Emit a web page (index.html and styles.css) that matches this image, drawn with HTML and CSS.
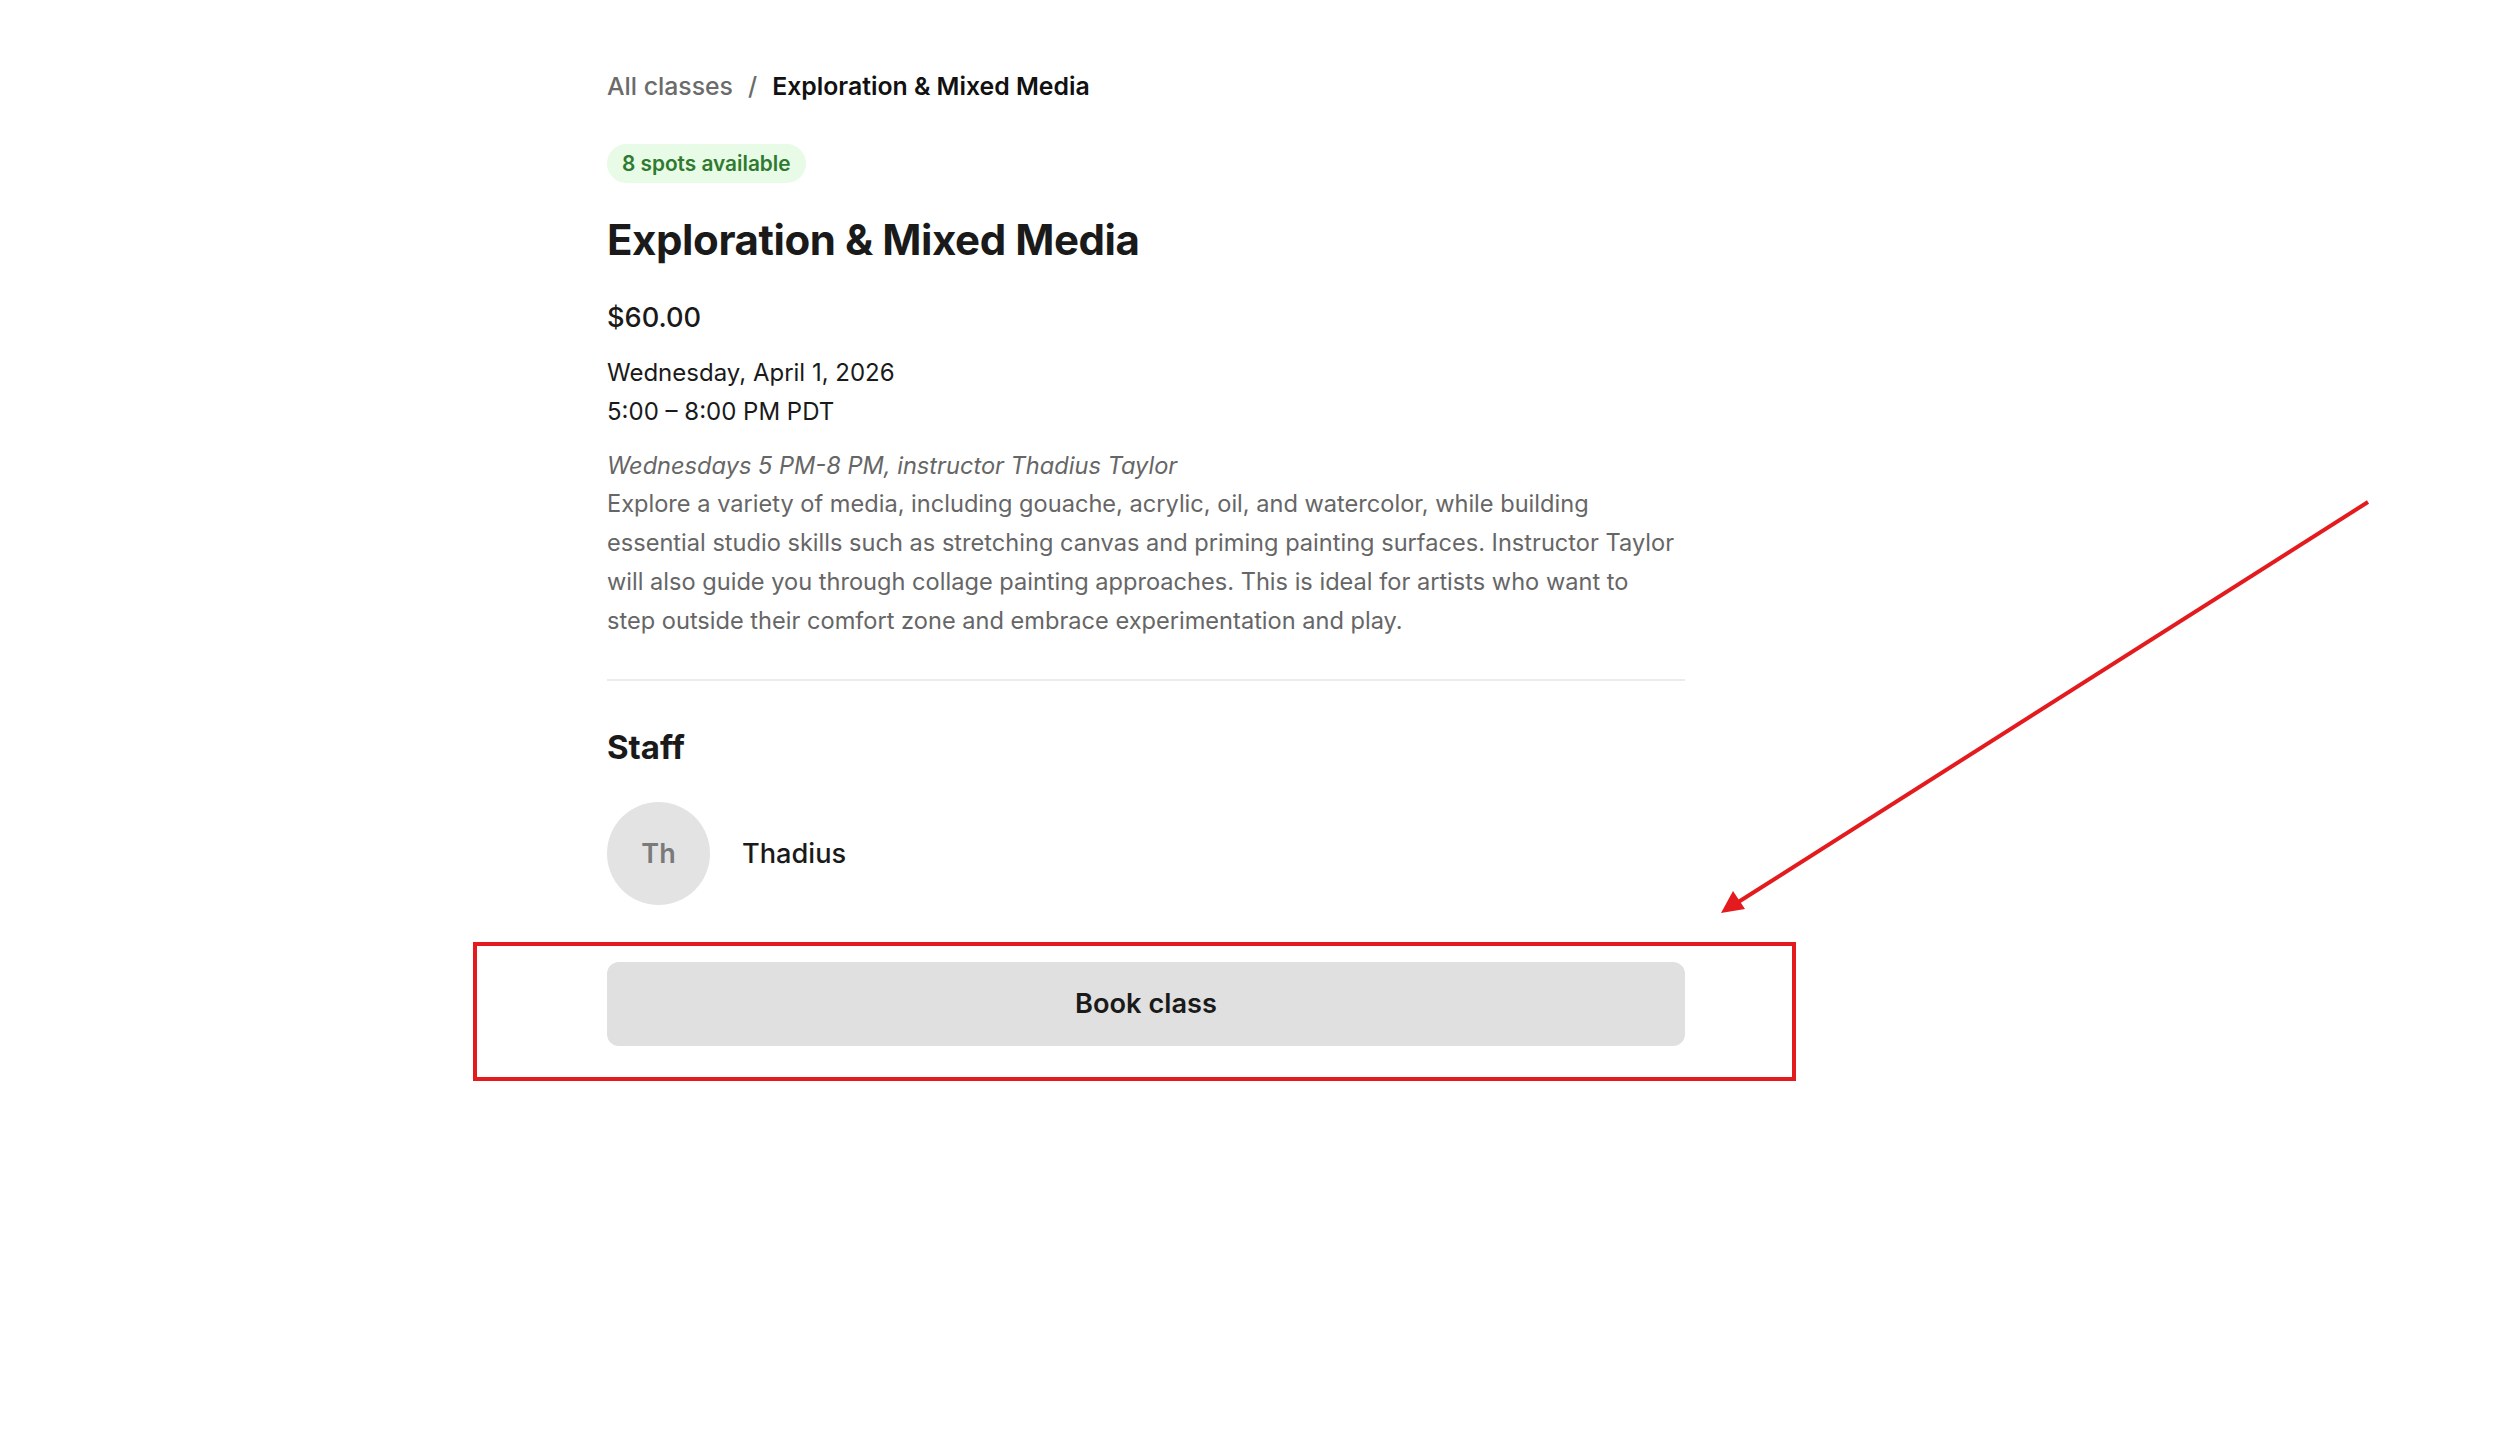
FILE: index.html
```html
<!DOCTYPE html>
<html lang="en">
<head>
<meta charset="utf-8">
<title>Exploration &amp; Mixed Media</title>
<link rel="stylesheet" href="styles.css">
</head>
<body>
<main class="page">
  <nav class="crumbs">
    <a class="crumb-link" href="#">All classes</a>
    <span class="crumb-sep">/</span>
    <span class="crumb-current">Exploration &amp; Mixed Media</span>
  </nav>
  <div class="badge">8 spots available</div>
  <h1 class="title">Exploration &amp; Mixed Media</h1>
  <div class="price">$60.00</div>
  <div class="when">
    <div>Wednesday, April 1, 2026</div>
    <div>5:00 – 8:00 PM PDT</div>
  </div>
  <div class="desc">
    <em>Wednesdays 5 PM-8 PM, instructor Thadius Taylor</em><br>
    Explore a variety of media, including gouache, acrylic, oil, and watercolor, while building essential studio skills such as stretching canvas and priming painting surfaces. Instructor Taylor will also guide you through collage painting approaches. This is ideal for artists who want to step outside their comfort zone and embrace experimentation and play.
  </div>
  <hr class="divider">
  <h2 class="staff-title">Staff</h2>
  <div class="staff">
    <div class="avatar">Th</div>
    <div class="staff-name">Thadius</div>
  </div>
  <button class="book">Book class</button>
</main>
<div class="mark-box"></div>
<svg class="mark-arrow" width="2500" height="1443" viewBox="0 0 2500 1443">
  <line x1="2368" y1="502" x2="1732" y2="906" stroke="#e31b1f" stroke-width="4"/>
  <polygon points="1721,913 1733,891 1745,909" fill="#e31b1f"/>
</svg>
</body>
</html>
```
FILE: styles.css
```css
html, body {
  margin: 0;
  padding: 0;
  background: #ffffff;
}
body {
  font-family: Inter, "Noto Sans", "Liberation Sans", sans-serif;
  color: #1a1a1a;
  width: 2500px;
  height: 1443px;
  position: relative;
  overflow: hidden;
}
.page {
  width: 1078px;
  margin-left: 607px;
  padding-top: 67px;
  display: flex;
  flex-direction: column;
  align-items: flex-start;
}
.crumbs {
  font-size: 24.8px;
  line-height: 38.4px;
  font-weight: 500;
  display: flex;
  gap: 15px;
}
.crumb-link {
  color: #6b6b6b;
  text-decoration: none;
}
.crumb-sep {
  color: #6b6b6b;
}
.crumb-current {
  color: #111111;
  font-weight: 600;
}
.badge {
  margin-top: 38.5px;
  height: 39px;
  line-height: 39px;
  padding: 0 15px;
  border-radius: 20px;
  background: #e7fbe7;
  color: #2f7a2f;
  font-size: 20.8px;
  font-weight: 600;
}
.title {
  margin: 36px 0 0;
  font-size: 42px;
  line-height: 42px;
  font-weight: 700;
  letter-spacing: -0.01em;
  color: #1a1a1a;
}
.price {
  margin-top: 37px;
  font-size: 27.2px;
  line-height: 40px;
  font-weight: 500;
  color: #1a1a1a;
}
.when {
  margin-top: 16px;
  font-size: 24px;
  line-height: 38.8px;
  color: #1a1a1a;
}
.desc {
  margin-top: 15px;
  width: 1073px;
  font-size: 23.6px;
  line-height: 38.8px;
  color: #666666;
}
.desc em {
  font-style: italic;
}
.divider {
  align-self: stretch;
  margin: 39px 0 0;
  border: 0;
  border-top: 2px solid #ececec;
}
.staff-title {
  margin: 47px 0 0;
  font-size: 33px;
  line-height: 38.4px;
  font-weight: 700;
  color: #1a1a1a;
}
.staff {
  margin-top: 35px;
  display: flex;
  align-items: center;
  gap: 32px;
}
.avatar {
  width: 103px;
  height: 103px;
  border-radius: 50%;
  background: #e3e3e3;
  color: #7a7a7a;
  font-size: 27px;
  font-weight: 600;
  display: flex;
  align-items: center;
  justify-content: center;
}
.staff-name {
  font-size: 27.2px;
  font-weight: 500;
  color: #1a1a1a;
}
.book {
  margin-top: 57px;
  align-self: stretch;
  height: 84px;
  border: 0;
  border-radius: 12px;
  background: #e0e0e0;
  color: #1a1a1a;
  font-family: inherit;
  font-size: 27.2px;
  font-weight: 600;
}
.mark-box {
  position: absolute;
  left: 473px;
  top: 942px;
  width: 1315px;
  height: 131px;
  border: 4px solid #e31b1f;
  pointer-events: none;
}
.mark-arrow {
  position: absolute;
  left: 0;
  top: 0;
  pointer-events: none;
}
```
